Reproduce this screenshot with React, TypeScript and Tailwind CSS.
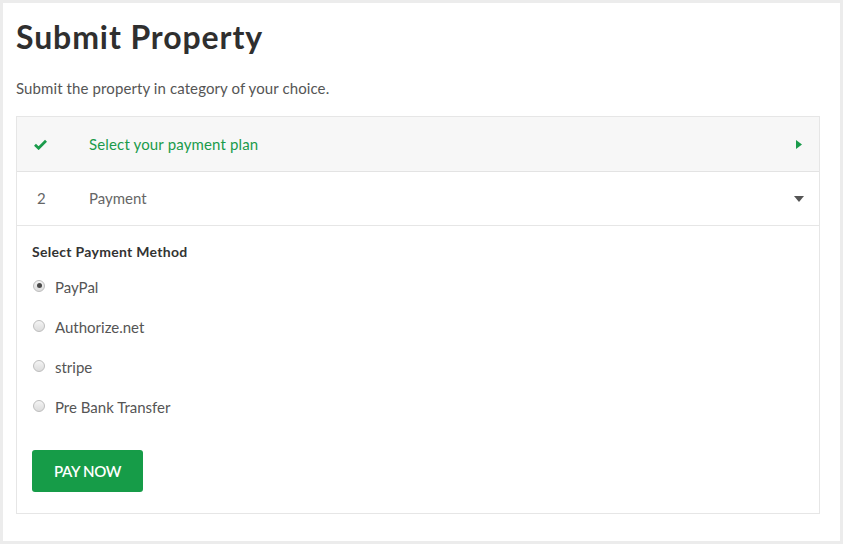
import { useState } from 'react';

const methods = ['PayPal', 'Authorize.net', 'stripe', 'Pre Bank Transfer'];

export default function App() {
  const [method, setMethod] = useState('PayPal');

  return (
    <div
      className="min-h-[544px] w-[843px] bg-[#ececec] pt-[3px] pl-[3px]"
      style={{ fontFamily: 'Lato, "Open Sans", sans-serif' }}
    >
      <div className="w-[837px] h-[538px] bg-white pl-[13px] pt-[12px]">
        <h1 className="text-[32px] leading-[44px] font-bold text-[#2f2f2f] tracking-[0.9px]">
          Submit Property
        </h1>
        <p className="mt-[18px] text-[15px] leading-[22px] text-[#555] tracking-[0.1px]">
          Submit the property in category of your choice.
        </p>

        <div className="mt-[17px] w-[804px] border border-[#e6e6e6]">
          {/* step 1 - done */}
          <div className="flex items-center h-[55px] bg-[#f7f7f7] border-b border-[#e3e3e3]">
            <span className="w-[72px] pl-[17px] text-[#1a9b4b]">
              <svg width="13" height="11" viewBox="0 0 13 11">
                <path d="M1 5.8 L4.6 9.2 L12 1.8" fill="none" stroke="currentColor" strokeWidth="2.8" />
              </svg>
            </span>
            <span className="flex-1 text-[15px] text-[#1a9b4b] tracking-[0.15px]">Select your payment plan</span>
            <svg className="mr-[17px]" width="6" height="9" viewBox="0 0 6 9">
              <path d="M0 0 L6 4.5 L0 9 Z" fill="#1a9b4b" />
            </svg>
          </div>

          {/* step 2 - active */}
          <div className="flex items-center h-[54px] border-b border-[#e6e6e6]">
            <span className="w-[72px] pl-[20px] text-[15px] text-[#666]">2</span>
            <span className="flex-1 text-[15px] text-[#666]">Payment</span>
            <svg className="mr-[15px]" width="10" height="6" viewBox="0 0 10 6">
              <path d="M0 0 L10 0 L5 6 Z" fill="#555" />
            </svg>
          </div>

          <div className="pl-[15px] pt-[17px] pb-[21px]">
            <h3 className="text-[14px] leading-[18px] font-bold text-[#333] tracking-[0.3px]">
              Select Payment Method
            </h3>
            <div className="mt-[6px] flex flex-col">
              {methods.map((m) => (
                <label key={m} className="flex items-center h-[40px] cursor-pointer">
                  <span
                    className="w-[12px] h-[12px] rounded-full border border-[#bdbdbd] bg-gradient-to-b from-[#f4f4f4] to-[#dcdcdc] flex items-center justify-center ml-[1px] mr-[10px] -mt-[3px]"
                    onClick={() => setMethod(m)}
                  >
                    {method === m && <span className="w-[5px] h-[5px] rounded-full bg-[#4a4a4a]" />}
                  </span>
                  <span className="text-[15px] text-[#555]">{m}</span>
                </label>
              ))}
            </div>
            <button className="mt-[23px] w-[111px] h-[42px] rounded-[3px] bg-[#169c48] text-white text-[15px] font-semibold tracking-[-0.3px]">
              PAY NOW
            </button>
          </div>
        </div>
      </div>
    </div>
  );
}
